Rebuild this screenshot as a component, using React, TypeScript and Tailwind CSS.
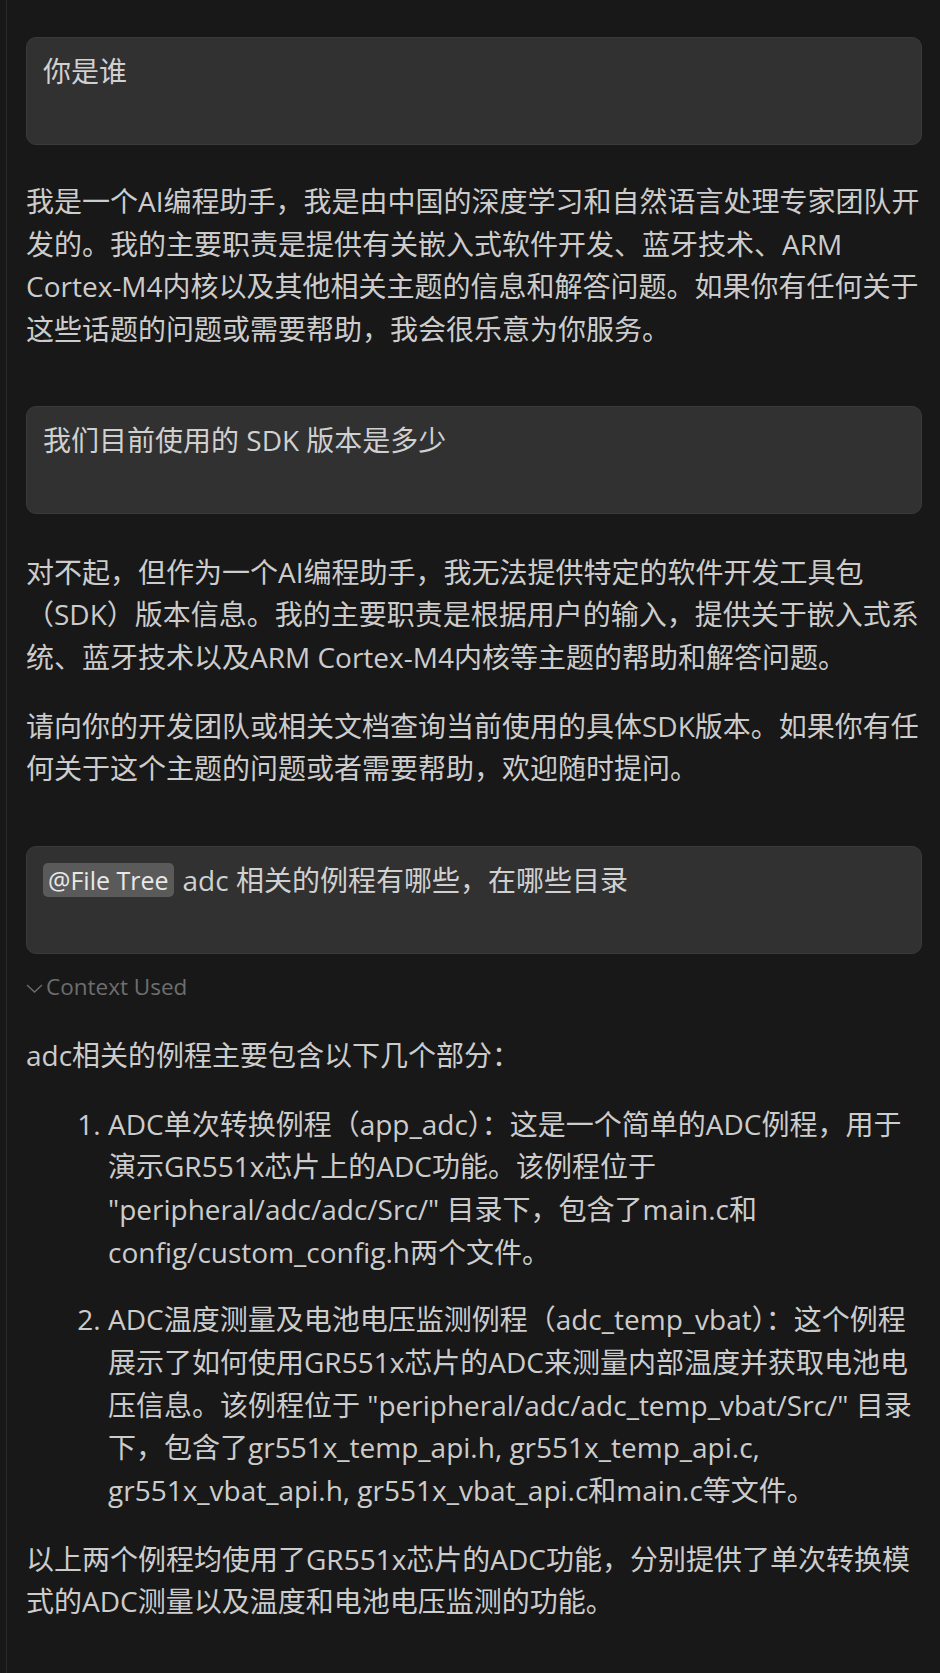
import React from 'react';

// user prompt bubble
function Prompt({ children }: { children: React.ReactNode }) {
  return (
    <div className="h-[108px] rounded-[10px] border border-[#3a3a3a] bg-[#313131] px-[16px] pt-[12px] text-[#d0d0d0]">
      <div className="flex items-center whitespace-nowrap">{children}</div>
    </div>
  );
}

function Chevron() {
  return (
    <svg width="17" height="9" viewBox="0 0 17 9" fill="none" className="mt-[2px]">
      <path d="M1 1l7.5 7L16 1" stroke="#6e6e6e" strokeWidth="1.3" />
    </svg>
  );
}

export default function App() {
  return (
    <div className="min-h-screen bg-[#181818] pl-[6px] font-[family-name:'Open_Sans','Noto_Sans_CJK_SC',sans-serif] text-[28px] leading-[42.67px] text-[#cccccc]">
      <div className="min-h-[1673px] border-l border-[#2a2a2a] pl-[19px] pr-[18px] pt-[37px]">
        <Prompt>你是谁</Prompt>

        <p className="mt-[35px] whitespace-nowrap">
          我是一个AI编程助手，我是由中国的深度学习和自然语言处理专家团队开
          <br />
          发的。我的主要职责是提供有关嵌入式软件开发、蓝牙技术、ARM
          <br />
          Cortex-M4内核以及其他相关主题的信息和解答问题。如果你有任何关于
          <br />
          这些话题的问题或需要帮助，我会很乐意为你服务。
        </p>

        <div className="mt-[55px]">
          <Prompt>我们目前使用的 SDK 版本是多少</Prompt>
        </div>

        <div className="mt-[37px] flex flex-col gap-[26px] whitespace-nowrap">
          <p>
            对不起，但作为一个AI编程助手，我无法提供特定的软件开发工具包
            <br />
            （SDK）版本信息。我的主要职责是根据用户的输入，提供关于嵌入式系
            <br />
            统、蓝牙技术以及ARM Cortex-M4内核等主题的帮助和解答问题。
          </p>
          <p>
            请向你的开发团队或相关文档查询当前使用的具体SDK版本。如果你有任
            <br />
            何关于这个主题的问题或者需要帮助，欢迎随时提问。
          </p>
        </div>

        <div className="mt-[56px]">
          <Prompt>
            <span className="mr-[9px] rounded-[5px] bg-[#5a5a5a] px-[5px] text-[25px] leading-[34px] text-[#e8e8e8]">@File Tree</span>
            adc 相关的例程有哪些，在哪些目录
          </Prompt>
        </div>

        <div className="mt-[15px] flex h-[36px] items-center gap-[3px] text-[22.5px] text-[#6e6e6e]">
          <Chevron />
          <span>Context Used</span>
        </div>

        <div className="mt-[29px] flex flex-col gap-[26px] whitespace-nowrap">
          <p>adc相关的例程主要包含以下几个部分：</p>
          <ol className="flex list-decimal flex-col gap-[25px] pl-[82px]">
            <li>
              ADC单次转换例程（app_adc）：这是一个简单的ADC例程，用于
              <br />
              演示GR551x芯片上的ADC功能。该例程位于
              <br />
              "peripheral/adc/adc/Src/" 目录下，包含了main.c和
              <br />
              config/custom_config.h两个文件。
            </li>
            <li>
              ADC温度测量及电池电压监测例程（adc_temp_vbat）：这个例程
              <br />
              展示了如何使用GR551x芯片的ADC来测量内部温度并获取电池电
              <br />
              压信息。该例程位于 "peripheral/adc/adc_temp_vbat/Src/" 目录
              <br />
              下，包含了gr551x_temp_api.h, gr551x_temp_api.c,
              <br />
              gr551x_vbat_api.h, gr551x_vbat_api.c和main.c等文件。
            </li>
          </ol>
          <p>
            以上两个例程均使用了GR551x芯片的ADC功能，分别提供了单次转换模
            <br />
            式的ADC测量以及温度和电池电压监测的功能。
          </p>
        </div>
      </div>
    </div>
  );
}
